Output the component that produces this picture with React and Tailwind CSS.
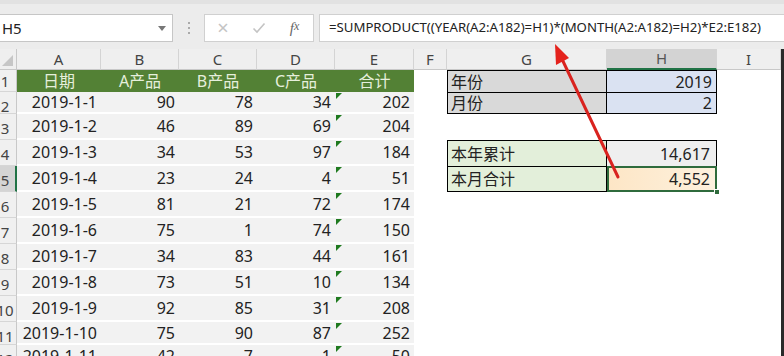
import React from "react";

const FONT = { fontFamily: '"Noto Sans", "Noto Sans CJK SC", sans-serif' };

const data = [
  ["2019-1-1", 90, 78, 34, 202],
  ["2019-1-2", 46, 89, 69, 204],
  ["2019-1-3", 34, 53, 97, 184],
  ["2019-1-4", 23, 24, 4, 51],
  ["2019-1-5", 81, 21, 72, 174],
  ["2019-1-6", 75, 1, 74, 150],
  ["2019-1-7", 34, 83, 44, 161],
  ["2019-1-8", 73, 51, 10, 134],
  ["2019-1-9", 92, 85, 31, 208],
  ["2019-1-10", 75, 90, 87, 252],
  ["2019-1-11", 42, 7, 1, 50],
];

const heights = ["h-[22px]", "h-[22px]", "h-[26px]", "h-[26px]", "h-[26px]", "h-[26px]", "h-[26px]", "h-[26px]", "h-[26px]", "h-[26px]", "h-[23px]", "h-[24px]"];

function RowHead({ n, h, active }) {
  return (
    <div
      className={`${h} overflow-hidden border-b border-[#d6d6d6] ${
        active ? "bg-[#d4d4d4] border-r-2 border-r-[#217346]" : "bg-[#f0f0f0] border-r border-r-[#c8c8c8]"
      }`}
    >
      <div className={`ml-[-5px] w-[20px] text-center text-[15px] leading-[22px] text-[#444] ${n > 1 ? "pt-[3px]" : ""}`}>{n}</div>
    </div>
  );
}

function Num({ v, h, tri }) {
  return (
    <div className={`${h} relative bg-[#f2f2f2] border-b-2 border-white flex items-center justify-end pr-[4px] text-[16px] text-[#222]`}>
      {tri && (
        <div className="absolute left-[1px] top-[1px] w-0 h-0 border-t-[6px] border-t-[#1f7a1f] border-r-[6px] border-r-transparent" />
      )}
      {v}
    </div>
  );
}

function Blank({ h }) {
  return <div className={`${h} bg-white`} />;
}

export default function App() {
  const colHeads = [
    ["A", false],
    ["B", false],
    ["C", false],
    ["D", false],
    ["E", false],
    ["F", false],
    ["G", false],
    ["H", true],
    ["I", false],
  ];

  const rightCells = (rowIdx, h) => {
    const r = rowIdx + 1;
    const cells = [<Blank key="f" h={h} />];
    if (r === 1 || r === 2) {
      cells.push(
        <div key="g" className={`${h} bg-[#d9d9d9] border-l border-r border-black ${r === 1 ? "border-t" : "border-t border-b"} flex items-center pl-[3px] text-[16px] text-[#222]`}>
          {r === 1 ? "年份" : "月份"}
        </div>
      );
      cells.push(
        <div key="h" className={`${h} bg-[#dae2f2] border-r border-black ${r === 1 ? "border-t" : "border-t border-b"} flex items-center justify-end pr-[4px] text-[16px] text-[#222]`}>
          {r === 1 ? "2019" : "2"}
        </div>
      );
    } else if (r === 4 || r === 5) {
      cells.push(
        <div key="g" className={`${h} bg-[#e3efda] border-l border-r border-black ${r === 4 ? "border-t" : "border-t border-b"} flex items-center pl-[3px] text-[16px] text-[#222]`}>
          {r === 4 ? "本年累计" : "本月合计"}
        </div>
      );
      if (r === 4) {
        cells.push(
          <div key="h" className={`${h} bg-[#efefef] border-r border-t border-black flex items-center justify-end pr-[6px] text-[16px] text-[#222]`}>
            14,617
          </div>
        );
      } else {
        cells.push(
          <div key="h" className={`${h} relative bg-gradient-to-r from-[#fde6c6] to-[#fdf1de] border-2 border-[#2f6b3c] flex items-center justify-end pr-[5px] text-[16px] text-[#222]`}>
            4,552
            <div className="absolute right-[-5px] bottom-[-5px] w-[6px] h-[6px] bg-[#2f6b3c] border border-white" />
          </div>
        );
      }
    } else {
      cells.push(<Blank key="g" h={h} />);
      cells.push(<Blank key="h" h={h} />);
    }
    cells.push(<Blank key="i" h={h} />);
    return cells;
  };

  return (
    <div className="w-[784px] h-[356px] overflow-hidden relative bg-white" style={FONT}>
      {/* formula bar */}
      <div className="h-[49px] bg-[#ececec] border-t-[4px] border-t-[#e2e2e2] flex items-start pt-[10px]">
        <div className="w-[173px] h-[28px] bg-white border border-[#c6c6c6] border-l-0 flex items-center justify-between pl-[2px] pr-[6px]">
          <span className="text-[15px] text-[#222]">H5</span>
          <div className="w-0 h-0 border-l-[4px] border-r-[4px] border-t-[5px] border-l-transparent border-r-transparent border-t-[#777]" />
        </div>
        <div className="w-[31px] h-[28px] flex flex-col items-center justify-center gap-[3px]">
          <div className="w-[2px] h-[2px] bg-[#aaa]" />
          <div className="w-[2px] h-[2px] bg-[#aaa]" />
          <div className="w-[2px] h-[2px] bg-[#aaa]" />
        </div>
        <div className="w-[110px] h-[28px] bg-white border border-[#d0d0d0] flex items-center">
          <div className="w-[36px] flex justify-center text-[#c4c4c4] text-[20px] leading-none">×</div>
          <div className="w-[35px] flex justify-center">
            <svg width="14" height="12" viewBox="0 0 14 12"><path d="M1.5 6.5 L5 10 L12.5 1.5" fill="none" stroke="#c4c4c4" strokeWidth="1.6" /></svg>
          </div>
          <div className="w-[37px] flex justify-center text-[#666] text-[15px] italic" style={{ fontFamily: '"Liberation Serif", serif' }}>
            f<span className="text-[12px]">x</span>
          </div>
        </div>
        <div className="w-[5px]" />
        <div className="flex-1 h-[28px] bg-white border border-[#d0d0d0] border-r-0 flex items-center pl-[9px] text-[13.2px] text-[#222] whitespace-nowrap">
          =SUMPRODUCT((YEAR(A2:A182)=H1)*(MONTH(A2:A182)=H2)*E2:E182)
        </div>
      </div>

      {/* grid */}
      <div className="grid grid-cols-[17px_84px_78px_78px_78px_79px_33px_160px_110px_64px_3px]">
        <div className="h-[21px] bg-[#efefef] border-r border-b border-[#c8c8c8] relative">
          <div className="absolute right-[3px] bottom-[3px] w-0 h-0 border-b-[11px] border-b-[#c6c6c6] border-l-[11px] border-l-transparent" />
        </div>
        {colHeads.map(([c, active]) => (
          <div
            key={c}
            className={`h-[21px] flex items-center justify-center text-[15px] border-r border-[#d4d4d4] ${
              active ? "bg-[#d3d3d3] text-[#555] border-b-2 border-b-[#217346]" : "bg-[#efefef] text-[#444] border-b border-b-[#c8c8c8]"
            }`}
          >
            {c}
          </div>
        ))}
        <div className="bg-[#2a2a2a]" />

        <RowHead n={1} h={heights[0]} />
        {["日期", "A产品", "B产品", "C产品", "合计"].map((t) => (
          <div key={t} className={`${heights[0]} bg-[#538135] flex items-center justify-center text-[16px] text-[#e6efdc]`}>
            {t}
          </div>
        ))}
        {rightCells(0, heights[0])}
        <div className="bg-[#2a2a2a]" />

        {data.map((row, i) => {
          const r = i + 2;
          const h = heights[r - 1];
          return (
            <React.Fragment key={r}>
              <RowHead n={r} h={h} active={r === 5} />
              <div className={`${h} bg-[#f2f2f2] border-b-2 border-white flex items-center justify-end pr-[4px] text-[16px] text-[#222]`}>
                {row[0]}
              </div>
              <Num v={row[1]} h={h} />
              <Num v={row[2]} h={h} />
              <Num v={row[3]} h={h} />
              <Num v={row[4]} h={h} tri />
              {rightCells(i + 1, h)}
              <div className="bg-[#2a2a2a]" />
            </React.Fragment>
          );
        })}
      </div>

      {/* red arrow overlay */}
      <svg className="absolute left-0 top-0 pointer-events-none" width="784" height="356">
        <line x1="618" y1="177" x2="561" y2="57" stroke="#d9231f" strokeWidth="3" strokeLinecap="round" />
        <polygon points="555,44 569,58 556,65" fill="#e4221c" />
      </svg>
    </div>
  );
}
